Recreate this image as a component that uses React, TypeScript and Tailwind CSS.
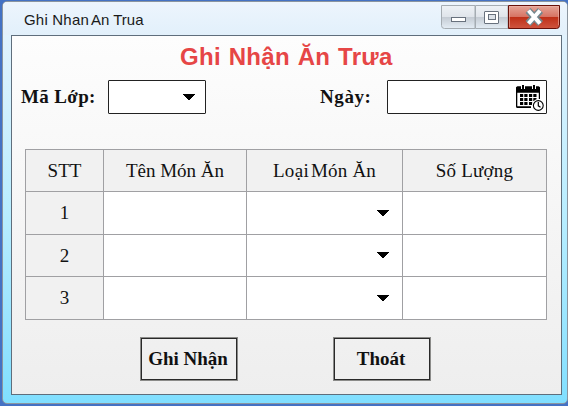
import type { ReactNode } from "react";

const serif = "font-['Liberation_Serif','Times_New_Roman',serif]";
const sans = "font-['Liberation_Sans',Arial,sans-serif]";

function Caret({ className = "" }: { className?: string }) {
  return (
    <svg className={className} width="14" height="7" viewBox="0 0 14 7" shapeRendering="crispEdges">
      <path d="M1 0h12v1h-1v1h-1v1h-1v1H9v1H8v1H6V5H5V4H4V3H3V2H2V1H1z" fill="#000" />
    </svg>
  );
}

function CalendarClock() {
  const columns = [4, 8.3, 13, 17.300];
  return (
    <svg width="29" height="28" viewBox="0 0 29 28">
      <path d="M0 4q0-1.500 1.500-1.500h21Q24 2.500 24 4v11h-1.200V8.500H1.300v13.700H15V24H1.500Q0 24 0 22.500z" fill="#000" />
      <path d="M0 4q0-1.500 1.500-1.500h21Q24 2.500 24 4v4.500H0z" fill="#000" />
      <path d="M5 1h4v4H5zM16 1h4v4h-4z" fill="#fff" />
      <path d="M6 1h2v4H6zM17 1h2v4h-2z" fill="#000" />
      {[10, 14, 18].map((y) =>
        columns.map((x) => <rect key={`${x}-${y}`} x={x} y={y} width="3.200" height="3" fill="#000" />),
      )}
      <circle cx="22.300" cy="21.500" r="6.500" fill="#fff" />
      <circle cx="22.300" cy="21.500" r="4.900" fill="#fff" stroke="#000" strokeWidth="1.100" />
      <path d="M22.300 18v3.800l2.200 1.400" fill="none" stroke="#000" strokeWidth="1.200" />
    </svg>
  );
}

function WindowButtons() {
  return (
    <svg className="ml-auto mr-[6px] mt-[3px]" width="120" height="25" viewBox="0 0 120 25">
      <defs>
        <linearGradient id="silver" x1="0" y1="0" x2="0" y2="1">
          <stop offset="0" stopColor="#eef2f6" />
          <stop offset="0.500" stopColor="#dfe4ea" />
          <stop offset="0.520" stopColor="#c5ccd4" />
          <stop offset="1" stopColor="#e4edf5" />
        </linearGradient>
        <linearGradient id="red" x1="0" y1="0" x2="0" y2="1">
          <stop offset="0" stopColor="#e5a699" />
          <stop offset="0.480" stopColor="#d77464" />
          <stop offset="0.520" stopColor="#bf3018" />
          <stop offset="1" stopColor="#cf5540" />
        </linearGradient>
      </defs>
      <path d="M.5.500H34v23H3.500Q.5 23.500.5 20.500z" fill="url(#silver)" stroke="#a5acb2" />
      <path d="M34.500.500H67v23H34.500z" fill="url(#silver)" stroke="#a5acb2" />
      <path d="M67.500.500h51v20q0 3-3 3h-48z" fill="url(#red)" stroke="#671009" />
      <path d="M68.500 22V1.500h49V20" fill="none" stroke="#efb8ad" strokeOpacity=".6" />
      <rect x="10.500" y="12.500" width="14" height="4" fill="#fff" stroke="#68717d" />
      <rect x="43.500" y="6.500" width="14" height="12" rx=".5" fill="#fff" stroke="#68717d" />
      <rect x="47.500" y="9.500" width="7" height="5" fill="#dce2e9" stroke="#68717d" />
      <path d="m87 5.500 12.500 13m0-13L87 18.500" stroke="#74878d" strokeWidth="7" />
      <path d="m87.500 5.500 11.500 13m0-13L87.500 18.500" stroke="#fff" strokeWidth="4" />
    </svg>
  );
}

function HeaderCell({ children }: { children: ReactNode }) {
  return <div className="flex items-center justify-center whitespace-pre bg-[#f1f1f1] pt-px">{children}</div>;
}

function ActionButton({ children }: { children: ReactNode }) {
  return (
    <button className="h-[44px] w-[98px] border border-[#8b8b89]">
      <span className="flex h-full items-center justify-center whitespace-pre border border-[#292929] pr-[2px] pt-px">
        {children}
      </span>
    </button>
  );
}

export default function App() {
  return (
    <div className="h-[406px] w-[568px] overflow-hidden bg-[#4472c4] pl-[2px] pt-px">
      <div className="flex h-[403px] w-[566px] flex-col rounded-[5px] border border-[#8b959f] bg-linear-to-b from-[#e8f3fd] via-[#b6edff] via-55% to-[#80dfff]">
        <div className={`flex h-[33px] shrink-0 rounded-t-[4px] bg-linear-to-b from-[#edf5fd] to-[#e2f0fb] ${sans}`}>
          <div className="ml-[21px] mt-[9px] whitespace-pre text-[15px] leading-[18px] text-[#1a1a1a]">
            <span className="tracking-[0.2px]">Ghi Nhan</span>
            <span className="ml-[2px]">An Trua</span>
          </div>
          <WindowButtons />
        </div>
        <main className={`ml-[8px] flex h-[360px] w-[551px] flex-col border border-[#5f6e7c] bg-linear-to-b from-[#fdfdfd] to-[#eeeeee] text-[#111] ${serif}`}>
          <h1 className={`ml-[168px] mt-[6px] h-[30px] whitespace-pre text-[24px] font-bold leading-[30px] tracking-[0.3px] [word-spacing:0.8px] text-[#e64646] ${sans}`}>
            Ghi Nhận Ăn Trưa
          </h1>
          <div className="mt-[8px] flex h-[34px] items-center text-[19px] font-bold">
            <span className="ml-[9px] w-[87px] whitespace-pre tracking-[0.35px]">Mã Lớp:</span>
            <div className="flex h-[34px] w-[98px] items-center justify-end rounded-[1px] border border-[#222] bg-white pr-[9px]">
              <Caret />
            </div>
            <span className="ml-[114px] w-[67px] whitespace-pre tracking-[0.6px]">Ngày:</span>
            <div className="flex h-[34px] w-[160px] items-center justify-end rounded-[1px] border border-[#222] bg-white pr-px pt-[2px]">
              <CalendarClock />
            </div>
          </div>
          <div className="ml-[13px] mt-[35px] grid h-[171px] w-[522px] grid-cols-[77px_142px_155px_143px] grid-rows-[41px_42px_41px_42px] gap-px border border-[#a0a0a3] bg-[#a0a0a3] text-[19px]">
            <HeaderCell>STT</HeaderCell>
            <HeaderCell>Tên Món Ăn</HeaderCell>
            <HeaderCell>
              <span className="tracking-[0.3px]">Loại</span>
              <span className="ml-[2px] tracking-[0.2px]">Món Ăn</span>
            </HeaderCell>
            <HeaderCell>
              <span className="tracking-[0.2px]">Số Lượng</span>
            </HeaderCell>
            {[1, 2, 3].map((n) => (
              <div key={n} className="contents">
                <HeaderCell>{n}</HeaderCell>
                <div className="bg-white" />
                <div className="flex items-center justify-end bg-white pr-[12px]">
                  <Caret />
                </div>
                <div className="bg-white" />
              </div>
            ))}
          </div>
          <div className="ml-[128px] mt-[17px] flex gap-[95px] text-[19px] font-bold">
            <ActionButton>Ghi Nhận</ActionButton>
            <ActionButton>Thoát</ActionButton>
          </div>
        </main>
      </div>
    </div>
  );
}
